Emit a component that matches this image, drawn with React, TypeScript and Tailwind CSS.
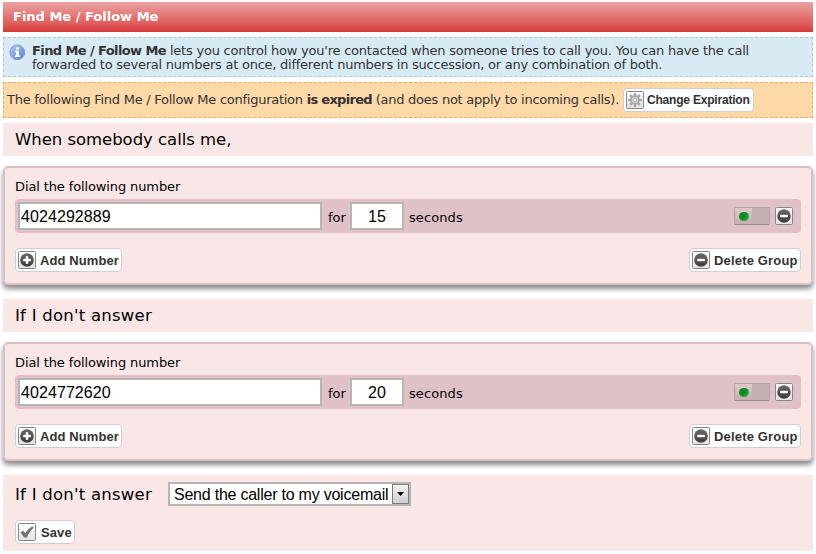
import React from "react";

type IconKind = "plus" | "minus" | "gear" | "check";

const gearTeeth = [0, 45, 90, 135, 180, 225, 270, 315];

function Icon({ kind }: { kind: IconKind }) {
  return (
    <svg width="18" height="18" viewBox="0 0 18 18" className="block shrink-0">
      <defs>
        <linearGradient id="tile" x1="0" y1="0" x2="0" y2="1">
          <stop offset="0" stopColor="#ffffff" />
          <stop offset="1" stopColor="#e2e2e2" />
        </linearGradient>
        <linearGradient id="disc" x1="0" y1="0" x2="0" y2="1">
          <stop offset="0" stopColor="#6a6a6a" />
          <stop offset="1" stopColor="#3c3c3c" />
        </linearGradient>
      </defs>
      <rect x="0.5" y="0.5" width="17" height="17" rx="1.2" fill="url(#tile)" stroke="#868686" />
      {(kind === "plus" || kind === "minus") && (
        <>
          <circle cx="9" cy="9" r="6.8" fill="url(#disc)" />
          <rect x="5.2" y="7.8" width="7.6" height="2.4" fill="#fff" />
        </>
      )}
      {kind === "plus" && <rect x="7.8" y="5.2" width="2.4" height="7.6" fill="#fff" />}
      {kind === "gear" && (
        <g>
          {gearTeeth.map((a) => (
            <rect key={a} x="7.7" y="2" width="2.6" height="3.4" rx="0.5" fill="#a8a8a8" transform={`rotate(${a} 9 9)`} />
          ))}
          <circle cx="9" cy="9" r="4" fill="#d2d2d2" stroke="#a2a2a2" strokeWidth="1.5" />
          <circle cx="9" cy="9" r="1.8" fill="#eeeeee" stroke="#a8a8a8" strokeWidth="0.8" />
        </g>
      )}
      {kind === "check" && <path d="M2.5 9.6 L5.2 7.8 L7.4 10.3 C9 7.3 11.3 4.9 14.6 3.2 L15.6 4.8 C13.2 7.2 10.8 10 9 14.4 L6.1 14.4 Z" fill="#747474" />}
    </svg>
  );
}

function Button({ icon, label, className, textClass }: { icon: IconKind; label: string; className: string; textClass: string }) {
  return (
    <button
      className={`flex h-6 shrink-0 items-center rounded-[4px] border border-[#d3cdd0] bg-white pl-[2px] font-['Liberation_Sans',sans-serif] font-bold text-[#333] ${className}`}
    >
      <Icon kind={icon} />
      <span className={`whitespace-nowrap leading-[18px] ${textClass}`}>{label}</span>
    </button>
  );
}

function Heading({ className, children }: { className: string; children: React.ReactNode }) {
  return (
    <h2 className={`h-[33px] bg-[#f9e7e7] pl-3 text-[16.5px] leading-[33px] whitespace-nowrap text-black ${className}`}>{children}</h2>
  );
}

function Toggle() {
  return (
    <div className="flex h-[18px] w-9 overflow-hidden rounded-[2px] border border-[#b5a0a4] border-b-[#9c8a8e]">
      <div className="flex w-[17px] items-center justify-center bg-linear-to-b from-[#e0cacd] to-[#c6adb1]">
        <span className="h-[9px] w-[10px] rounded-full bg-radial-[at_35%_35%] from-[#0a8d24] from-40% to-[#4cc95c]" />
      </div>
      <div className="flex-1 bg-[#c3b1b4]" />
    </div>
  );
}

function Group({ number, seconds }: { number: string; seconds: string }) {
  return (
    <section className="h-[119px] rounded-[5px] border-2 border-[#dfc0c5] bg-[#f9e7e7] px-[10px] shadow-[0_4px_5px_rgba(0,0,0,0.45)]">
      <div className="h-[31px] pt-[10px] text-[13px] leading-[18px] tracking-[-0.12px] whitespace-nowrap text-black">Dial the following number</div>
      <div className="flex h-[34px] items-center rounded-[4px] bg-[#dfc2c7] pr-2 pl-[3px] text-[13px] text-black">
        <input
          readOnly
          value={number}
          className="h-7 w-[304px] border-2 border-[#b9b5b5] bg-white pt-px pl-px font-['Liberation_Sans',sans-serif] text-[16px] tracking-[0.08px] outline-none"
        />
        <span className="ml-[6px] w-[22px] pt-[4px]">for</span>
        <input
          readOnly
          value={seconds}
          className="h-7 w-[54px] border-2 border-[#b9b5b5] bg-white pt-px text-center font-['Liberation_Sans',sans-serif] text-[16px] outline-none"
        />
        <span className="ml-[5px] pt-[4px] tracking-[0.1px]">seconds</span>
        <div className="ml-auto flex gap-[5px]">
          <Toggle />
          <Icon kind="minus" />
        </div>
      </div>
      <div className="mt-[15px] flex justify-between">
        <Button icon="plus" label="Add Number" className="w-[107px]" textClass="ml-1 pt-[2px] text-[13px] tracking-[0.1px]" />
        <Button icon="minus" label="Delete Group" className="w-[112px]" textClass="ml-1 pt-[2px] text-[13px] tracking-[0.17px]" />
      </div>
    </section>
  );
}

export default function App() {
  return (
    <main className="h-[554px] w-[816px] overflow-hidden bg-white pt-[2px] pr-[3px] pl-[3px] font-['DejaVu_Sans',sans-serif]">
      <h1 className="h-[30px] bg-linear-to-b from-[#eba2a4] to-[#d73a3c] pl-[10px] text-[13px] leading-[30px] font-bold whitespace-nowrap text-white">
        Find Me / Follow Me
      </h1>
      <div className="mt-[5px] flex h-10 border border-dashed border-[#a9cbd5] bg-[#d8ebf5] pt-[6px] pl-[5px] text-[13px] leading-[14px] text-[#333]">
        <svg width="17" height="17" viewBox="0 0 17 17" className="shrink-0">
          <defs>
            <linearGradient id="info" x1="0" y1="0" x2="1" y2="1">
              <stop offset="0" stopColor="#b4c8f2" />
              <stop offset="1" stopColor="#5c82d0" />
            </linearGradient>
          </defs>
          <circle cx="8.3" cy="8.3" r="7.4" fill="url(#info)" stroke="#7b9bda" />
          <path d="M7 3.2h2.8v2.2H7zM6.2 6.6h3.6v5h1.2v1.5H6v-1.5h1.2V8.1h-1z" fill="#fff" />
        </svg>
        <p className="ml-[6px] whitespace-nowrap">
          <span className="block tracking-[-0.22px]">
            <b className="tracking-[-0.6px]">Find Me / Follow Me</b> lets you control how you're contacted when someone tries to call you. You can have the call
          </span>
          <span className="block tracking-[-0.245px]">forwarded to several numbers at once, different numbers in succession, or any combination of both.</span>
        </p>
      </div>
      <div className="mt-[5px] flex h-9 items-center border border-dashed border-[#e2ae6c] bg-[#ffd9a8] pl-[3px] text-[13px] text-[#333]">
        <p className="w-[617px] shrink-0 whitespace-nowrap tracking-[-0.26px]">
          The following Find Me / Follow Me configuration <b className="tracking-[-0.7px]">is expired</b> (and does not apply to incoming calls).
        </p>
        <Button icon="gear" label="Change Expiration" className="-ml-px w-[131px]" textClass="ml-[3px] text-[12px] tracking-[-0.2px]" />
      </div>
      <div className="mt-[5px]">
        <Heading className="tracking-[-0.04px]">When somebody calls me,</Heading>
      </div>
      <div className="mt-[10px]">
        <Group number="4024292889" seconds="15" />
      </div>
      <div className="mt-[14px]">
        <Heading className="tracking-[0.24px]">If I don't answer</Heading>
      </div>
      <div className="mt-[10px]">
        <Group number="4024772620" seconds="20" />
      </div>
      <section className="mt-[14px] h-[76px] bg-[#f9e7e7] pt-[7px] pl-3">
        <div className="flex h-6 items-center">
          <span className="w-[153px] pt-[2px] text-[16.5px] leading-6 tracking-[0.24px] whitespace-nowrap text-black">If I don't answer</span>
          <div className="flex h-6 w-[243px] items-center border-2 border-[#b9b5b5] bg-white pl-1 font-['Liberation_Sans',sans-serif] text-[16px] text-black">
            <span className="pt-px whitespace-nowrap tracking-[-0.23px]">Send the caller to my voicemail</span>
            <span className="ml-auto flex h-5 w-[17px] shrink-0 items-center justify-center border border-[#7c7c7c] bg-linear-to-b from-[#f4f4f4] to-[#cfcfcf]">
              <svg width="7" height="4" viewBox="0 0 7 4">
                <path d="M0 0h7L3.5 4z" fill="#000" />
              </svg>
            </span>
          </div>
        </div>
        <div className="mt-[14px]">
          <Button icon="check" label="Save" className="w-[60px]" textClass="ml-[5px] pt-[2px] text-[13px] tracking-[0.1px]" />
        </div>
      </section>
    </main>
  );
}
